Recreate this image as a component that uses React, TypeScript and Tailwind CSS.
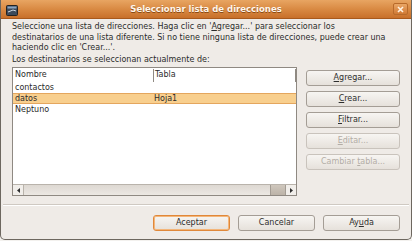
import React from 'react';

const FONT = { fontFamily: '"DejaVu Sans", "Liberation Sans", sans-serif' };

function Btn({ children, disabled, primary, className = '' }: { children: React.ReactNode; disabled?: boolean; primary?: boolean; className?: string }) {
  return (
    <div
      className={`flex h-[16px] items-center justify-center rounded-[3px] border bg-gradient-to-b from-[#f7f5f2] to-[#e6e1db] text-[8px] ${
        primary ? 'border-[#e0883a] shadow-[inset_0_0_0_1px_#f4b67a]' : disabled ? 'border-[#c9c3bc] text-[#b3ada6]' : 'border-[#a49d95] text-[#2e2e2e]'
      } ${className}`}
    >
      {children}
    </div>
  );
}

export default function App() {
  return (
    <div className="h-[241px] w-[412px] overflow-hidden bg-[#f3f1ee] leading-none text-[#2b2b2b]" style={FONT}>
      <div className="flex h-[240px] flex-col overflow-hidden rounded-b-[5px] border border-t-0 border-[#6d675f] bg-[#efebe7]">
        {/* title bar */}
        <div className="relative flex h-[19px] shrink-0 items-center justify-center border-b border-[#a8591c] bg-gradient-to-b from-[#e8a562] via-[#d98a43] to-[#c8702a]">
          <svg className="absolute left-[5px] top-[5px]" width="12" height="11" viewBox="0 0 12 11">
            <rect x="0.5" y="0.5" width="11" height="10" rx="1" fill="#3c4a5a" stroke="#222" />
            <rect x="1.5" y="1.5" width="9" height="2" fill="#8aa4c0" />
            <path d="M2 7 L7 5 L10 6" stroke="#cfd9e4" strokeWidth="1" fill="none" />
          </svg>
          <span className="text-[8.5px] font-bold text-[#fff6ec] [text-shadow:0_1px_0_#8a4a14]">Seleccionar lista de direcciones</span>
          <div className="absolute right-[3px] top-[3px] flex h-[12px] w-[15px] items-center justify-center rounded-[2px] border border-[#b86a2a] bg-gradient-to-b from-[#eaa766] to-[#d07a34]">
            <svg width="7" height="7" viewBox="0 0 7 7">
              <path d="M1 1 L6 6 M6 1 L1 6" stroke="#fff3e4" strokeWidth="1.6" />
            </svg>
          </div>
        </div>

        {/* body */}
        <div className="flex h-[185px] shrink-0 flex-col px-[11px]">
          <div className="pt-[3px] text-[8px] leading-[10.5px]">
            <p>Seleccione una lista de direcciones. Haga clic en '<u>A</u>gregar...' para seleccionar los</p>
            <p>destinatarios de una lista diferente. Si no tiene ninguna lista de direcciones, puede crear una</p>
            <p>haciendo clic en 'Crear...'.</p>
            <p className="mt-[1px]">Los destinatarios se seleccionan actualmente de:</p>
          </div>

          <div className="mt-[2px] flex">
            {/* list */}
            <div className="flex h-[129px] w-[285px] flex-col border border-[#8f8982] bg-white">
              <div className="flex h-[14px] shrink-0 items-center text-[8px]">
                <div className="w-[140px] pl-[2px]">Nombre</div>
                <div className="h-[13px] w-px bg-[#8f8982]" />
                <div className="flex-1 pl-[1px]">Tabla</div>
                <div className="h-[13px] w-px bg-[#8f8982]" />
              </div>
              <div className="flex-1 text-[8px]">
                <div className="flex h-[11px] items-center pl-[2px]">contactos</div>
                <div className="flex h-[11px] items-center border-y border-[#e4a65e] bg-[#f8cf8e]">
                  <div className="w-[141px] pl-[2px]">datos</div>
                  <div>Hoja1</div>
                </div>
                <div className="flex h-[11px] items-center pl-[2px]">Neptuno</div>
              </div>
              {/* scrollbar */}
              <div className="flex h-[11px] shrink-0 border-t border-[#b9b3ab] bg-gradient-to-b from-[#ddd8d2] to-[#ece8e3]">
                <div className="flex w-[11px] items-center justify-center border-r border-[#b9b3ab] bg-[#f1eeea]">
                  <svg width="3" height="5" viewBox="0 0 3 5"><path d="M3 0 L0 2.5 L3 5 Z" fill="#2e2e2e" /></svg>
                </div>
                <div className="flex-1" />
                <div className="w-[16px] border-x border-[#a39c93] bg-gradient-to-b from-[#cfc7bd] to-[#bcb3a8]" />
                <div className="flex w-[10px] items-center justify-center bg-[#f1eeea]">
                  <svg width="3" height="5" viewBox="0 0 3 5"><path d="M0 0 L3 2.5 L0 5 Z" fill="#2e2e2e" /></svg>
                </div>
              </div>
            </div>

            {/* side buttons */}
            <div className="ml-[9px] mt-[3px] flex w-[94px] flex-col gap-[5px]">
              <Btn><span><u>A</u>gregar...</span></Btn>
              <Btn><span><u>C</u>rear...</span></Btn>
              <Btn><span><u>F</u>iltrar...</span></Btn>
              <Btn disabled><span><u>E</u>ditar...</span></Btn>
              <Btn disabled><span>Cambiar <u>t</u>abla...</span></Btn>
            </div>
          </div>
        </div>

        <div className="mx-[2px] h-[2px] shrink-0 border-y border-b-white border-t-[#cfc9c2]" />

        <div className="flex justify-end gap-[8px] px-[11px] pt-[9px]">
          <Btn primary className="w-[77px]"><span>Aceptar</span></Btn>
          <Btn className="w-[77px]"><span>Cancelar</span></Btn>
          <Btn className="w-[77px]"><span>Ay<u>u</u>da</span></Btn>
        </div>
      </div>
    </div>
  );
}
